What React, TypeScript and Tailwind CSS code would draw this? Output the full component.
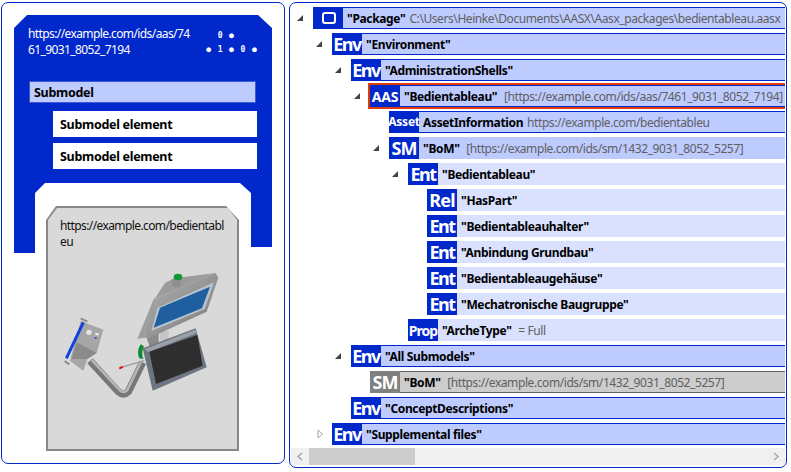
import React from "react";

type TRow = {
  level: string;
  icon: string;
  iconClass: string;
  name: string;
  rest?: string;
  toggle?: "open" | "closed";
  kind: "border" | "plain" | "light" | "grey" | "selected";
};

const big = "text-[18px] tracking-[-1.5px]";

const rows: TRow[] = [
  { level: "pl-[0px]", icon: "box", iconClass: "", name: '"Package"', rest: "C:\\Users\\Heinke\\Documents\\AASX\\Aasx_packages\\bedientableau.aasx", toggle: "open", kind: "border" },
  { level: "pl-[19px]", icon: "Env", iconClass: big, name: '"Environment"', toggle: "open", kind: "border" },
  { level: "pl-[38px]", icon: "Env", iconClass: big, name: '"AdministrationShells"', toggle: "open", kind: "border" },
  { level: "pl-[57px]", icon: "AAS", iconClass: "text-[14px] tracking-[-0.2px]", name: '"Bedientableau"', rest: "\u00a0[https://example.com/ids/aas/7461_9031_8052_7194]", toggle: "open", kind: "selected" },
  { level: "pl-[76px]", icon: "Asset", iconClass: "text-[12px] tracking-[-0.2px]", name: "AssetInformation", rest: "https://example.com/bedientableu", kind: "border" },
  { level: "pl-[76px]", icon: "SM", iconClass: "text-[18px] tracking-[-1px]", name: '"BoM"', rest: "\u00a0[https://example.com/ids/sm/1432_9031_8052_5257]", toggle: "open", kind: "plain" },
  { level: "pl-[95px]", icon: "Ent", iconClass: big, name: '"Bedientableau"', toggle: "open", kind: "light" },
  { level: "pl-[114px]", icon: "Rel", iconClass: "text-[18px] tracking-[-0.8px]", name: '"HasPart"', kind: "light" },
  { level: "pl-[114px]", icon: "Ent", iconClass: big, name: '"Bedientableauhalter"', kind: "light" },
  { level: "pl-[114px]", icon: "Ent", iconClass: big, name: '"Anbindung Grundbau"', kind: "light" },
  { level: "pl-[114px]", icon: "Ent", iconClass: big, name: '"Bedientableaugehäuse"', kind: "light" },
  { level: "pl-[114px]", icon: "Ent", iconClass: big, name: '"Mechatronische Baugruppe"', kind: "light" },
  { level: "pl-[95px]", icon: "Prop", iconClass: "text-[14px] tracking-[-1px]", name: '"ArcheType"', rest: "\u00a0= Full", kind: "light" },
  { level: "pl-[38px]", icon: "Env", iconClass: big, name: '"All Submodels"', toggle: "open", kind: "border" },
  { level: "pl-[57px]", icon: "SM", iconClass: "text-[18px] tracking-[-1px]", name: '"BoM"', rest: "\u00a0[https://example.com/ids/sm/1432_9031_8052_5257]", kind: "grey" },
  { level: "pl-[38px]", icon: "Env", iconClass: big, name: '"ConceptDescriptions"', kind: "border" },
  { level: "pl-[19px]", icon: "Env", iconClass: big, name: '"Supplemental files"', toggle: "closed", kind: "border" },
];

const bodyClass = {
  border: "bg-[#bdcbff] border-y border-[#0128cb]",
  plain: "bg-[#bdcbff]",
  light: "bg-[#d9e1ff]",
  grey: "bg-[#cdcdcd] border-y border-[#606060]",
  selected: "bg-[#bdcbff] border-y border-[#0128cb]",
};

function Toggle({ state }: { state?: "open" | "closed" }) {
  return (
    <div className="w-[19px] h-[22px] shrink-0 flex items-center justify-start pl-[2px]">
      {state === "open" && (
        <svg width="8" height="8" viewBox="0 0 8 8">
          <path d="M7 1V7H1Z" fill="#444444" />
        </svg>
      )}
      {state === "closed" && (
        <svg width="8" height="10" viewBox="0 0 8 10" className="ml-[2px]">
          <path d="M1 1L5.5 5L1 9Z" fill="#ffffff" stroke="#a6a6a6" />
        </svg>
      )}
    </div>
  );
}

function TreeRow({ row }: { row: TRow }) {
  const grey = row.kind === "grey";
  return (
    <div className={`flex h-[22px] mb-[4px] ${row.level}`}>
      <Toggle state={row.toggle} />
      <div className={`flex flex-1 h-[22px] ${row.kind === "selected" ? "outline-2 outline-[#dd3d0b]" : ""}`}>
        <div className={`w-[30px] h-[22px] shrink-0 flex items-center justify-center font-bold text-white overflow-hidden ${grey ? "bg-[#808080]" : "bg-[#0128cb]"} ${row.iconClass}`}>
          {row.icon === "box" ? (
            <div className="w-[14px] h-[12px] ml-[1px] border-[2.5px] border-white rounded-[3px]" />
          ) : (
            row.icon
          )}
        </div>
        <div className={`flex-1 flex items-center whitespace-nowrap pl-[4px] pt-[2px] text-[12px] tracking-[-0.42px] ${bodyClass[row.kind]}`}>
          <span className="font-bold text-black tracking-[-0.35px]">{row.name}</span>
          {row.rest && <span className="ml-[4px] text-[#5f6060]">{row.rest}</span>}
        </div>
      </div>
    </div>
  );
}

function Machine() {
  return (
    <svg width="180" height="150" viewBox="0 0 540 450" className="block -ml-[10px] mt-[10px]">
      <defs>
        <linearGradient id="frame" x1="0" y1="0" x2="1" y2="1">
          <stop offset="0" stopColor="#b0b0b0" />
          <stop offset="1" stopColor="#7c7c7c" />
        </linearGradient>
      </defs>
      {/* arm tube */}
      <path d="M120 305L205 398Q220 412 235 398L278 310" fill="none" stroke="#777777" strokeWidth="22" />
      <path d="M124 302L209 393Q220 404 232 393L273 308" fill="none" stroke="#b5b5b5" strokeWidth="8" />
      {/* wall plate */}
      <path d="M92 186L160 212L140 282L112 300L100 335L60 305Z" fill="#a6a6a6" />
      <path d="M80 250L140 282L112 300L65 300Z" fill="#8b8b8b" />
      <path d="M100 190L49 298" stroke="#1240dc" strokeWidth="9" />
      <path d="M92 178L112 188M44 306L58 316" stroke="#8c8c8c" strokeWidth="6" />
      <circle cx="117" cy="220" r="8" fill="#e4e4e4" />
      <rect x="136" y="222" width="10" height="7" fill="#ebebeb" />
      <rect x="134" y="234" width="6" height="6" fill="#2b62d8" />
      {/* rod */}
      <path d="M212 326L282 305" stroke="#9a9a9a" strokeWidth="4" />
      <path d="M208 329L218 323" stroke="#e01010" strokeWidth="6" />
      {/* neck */}
      <path d="M290 238L326 222L326 250L300 264Z" fill="#8a8a8a" />
      <rect x="330" y="216" width="26" height="28" fill="#c4c4c4" />
      {/* upper monitor */}
      <path d="M345 72L372 58L497 42L315 118Z" fill="#9b9b9b" />
      <rect x="367" y="58" width="26" height="26" rx="8" fill="#8f8f8f" />
      <ellipse cx="384" cy="54" rx="13" ry="10" fill="#0f9a35" />
      <path d="M262 240L312 118L322 130L284 236Z" fill="#9e9e9e" />
      <path d="M315 118L497 42L505 56L470 158L300 236L284 236Z" fill="url(#frame)" />
      <path d="M322 146L492 70L464 150L304 216Z" fill="#b7c3cf" />
      <path d="M330 146L480 83L456 148L311 206Z" fill="#205f9f" />
      {/* lower monitor */}
      <path d="M278 268L437 208L470 325L308 395Z" fill="#6d7580" />
      <path d="M284 270L436 212L440 222L294 280Z" fill="#9aa0a8" />
      <path d="M298 278L442 228L458 320L318 375Z" fill="#2e2e2e" />
      {/* green clamp */}
      <path d="M272 256Q258 278 268 298L280 300Q272 280 282 262Z" fill="#0f8a32" />
    </svg>
  );
}

function LeftPanel() {
  return (
    <div className="w-[284px] h-[462px] shrink-0 border border-[#0128cb] rounded-[7px] bg-white pt-[12px] pl-[12px] font-['Noto_Sans',sans-serif]">
      <div className="w-[258px] h-[238px] bg-[#0128cb] pt-[11px] [clip-path:polygon(13px_0,244px_0,258px_13px,258px_232px,237px_232px,237px_178px,226px_168px,31px_168px,21px_178px,21px_238px,0_238px,0_13px)]">
        <div className="flex justify-between pl-[14px] pr-[12px] h-[40px]">
          <div className="text-[12px] leading-[16px] tracking-[-0.6px] text-white">
            https://example.com/ids/aas/74
            <br />
            61_9031_8052_7194
          </div>
          <div className="grid grid-cols-5 w-[57px] h-[28px] mt-[3px] text-[8px] leading-[14px] font-bold text-white text-center font-['DejaVu_Sans_Mono',monospace]">
            <span />
            <span>0</span>
            <span>●</span>
            <span />
            <span />
            <span>●</span>
            <span>1</span>
            <span>●</span>
            <span>0</span>
            <span>●</span>
          </div>
        </div>
        <div className="ml-[15px] mt-[15px] w-[227px] h-[22px] bg-[#bdcbff] border border-[#3d5bd6] pl-[4px] pt-[2px] flex items-center text-[12.5px] font-bold tracking-[-0.3px] text-black">
          Submodel
        </div>
        <div className="ml-[39px] mt-[8px] w-[204px] h-[26px] bg-white pl-[7px] pt-[3px] flex items-center text-[12.5px] font-bold tracking-[-0.3px] text-black">
          Submodel element
        </div>
        <div className="ml-[39px] mt-[6px] w-[204px] h-[26px] bg-white pl-[7px] pt-[3px] flex items-center text-[12.5px] font-bold tracking-[-0.3px] text-black">
          Submodel element
        </div>
      </div>
      <div className="relative ml-[32px] -mt-[47px] w-[193px] h-[245px] bg-[#888888] p-[2px] [clip-path:polygon(10px_0,180px_0,193px_14px,193px_100%,0_100%,0_14px)]">
        <div className="h-full bg-[#d9d9d9] pt-[10px] pl-[12px] [clip-path:polygon(9px_0,180px_0,189px_12px,189px_100%,0_100%,0_12px)]">
          <div className="text-[12px] leading-[15.5px] tracking-[-0.6px] text-[#111111]">
            https://example.com/bedientabl
            <br />
            eu
          </div>
          <Machine />
        </div>
      </div>
    </div>
  );
}

function RightPanel() {
  return (
    <div className="w-[498px] h-[466px] ml-[4px] shrink-0 border border-[#0128cb] rounded-[7px] bg-white p-[1px] flex flex-col overflow-hidden font-['Noto_Sans',sans-serif]">
      <div className="h-[444px] pt-[3px] overflow-hidden pl-[3px]">
        {rows.map((row, i) => (
          <TreeRow key={i} row={row} />
        ))}
      </div>
      <div className="h-[17px] w-[494px] bg-[#f0f0f0] flex items-center">
        <svg width="18" height="17" viewBox="0 0 18 17" className="shrink-0">
          <path d="M11 5L7 8.5L11 12" fill="none" stroke="#a6a6a6" strokeWidth="1.5" />
        </svg>
        <div className="w-[106px] h-[17px] bg-[#cdcdcd]" />
        <div className="flex-1" />
        <svg width="18" height="17" viewBox="0 0 18 17" className="shrink-0">
          <path d="M7 5L11 8.5L7 12" fill="none" stroke="#a6a6a6" strokeWidth="1.5" />
        </svg>
      </div>
    </div>
  );
}

export default function App() {
  return (
    <div className="w-[791px] h-[472px] bg-white flex items-start pt-[2px] pl-[1px] overflow-hidden">
      <LeftPanel />
      <RightPanel />
    </div>
  );
}
